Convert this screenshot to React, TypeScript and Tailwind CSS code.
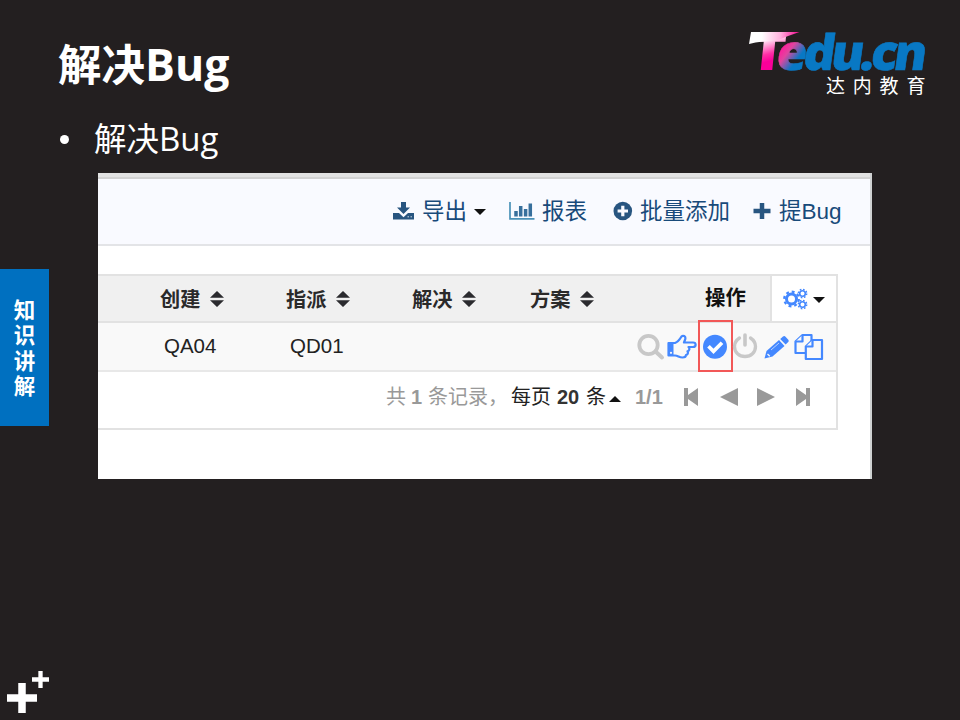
import React from "react";

const CJK = "font-['Liberation_Sans','Noto_Sans_CJK_SC',sans-serif]";
const SLIDE = "font-['Open_Sans','Noto_Sans_CJK_SC',sans-serif]";

function Logo() {
  return (
    <svg width="200" height="104" viewBox="740 0 200 104" className="shrink-0">
      <defs>
        <linearGradient id="pink" gradientUnits="userSpaceOnUse" x1="8" y1="-36" x2="16" y2="-8">
          <stop offset="0" stopColor="#ffffff" />
          <stop offset="0.3" stopColor="#ffd9ef" />
          <stop offset="0.75" stopColor="#ff2fa5" />
          <stop offset="1" stopColor="#fb0099" />
        </linearGradient>
        <linearGradient id="wing" gradientUnits="userSpaceOnUse" x1="762" y1="34" x2="799" y2="36">
          <stop offset="0" stopColor="#ffffff" />
          <stop offset="0.5" stopColor="#ffb0dd" />
          <stop offset="1" stopColor="#f5068f" />
        </linearGradient>
        <linearGradient id="blue" gradientUnits="userSpaceOnUse" x1="2" y1="-20" x2="20" y2="-9">
          <stop offset="0" stopColor="#ff1c9c" />
          <stop offset="0.4" stopColor="#e0459f" />
          <stop offset="1" stopColor="#0878c4" />
        </linearGradient>
      </defs>
      <text transform="translate(749 70) skewX(-6)" x="0" y="0" textLength="35" lengthAdjust="spacingAndGlyphs" fill="url(#pink)" fontSize="51" fontWeight="800" fontFamily="'Open Sans', sans-serif">T</text>
      <path d="M751 32H799.500Q787 36 776 41L763 41.500Q755 42 749 44Z" fill="url(#wing)" />
      <text transform="translate(775 70) skewX(-8)" x="0" y="0" textLength="150" lengthAdjust="spacing" fill="url(#blue)" stroke="url(#blue)" strokeWidth="0.600" fontSize="49" fontWeight="800" fontFamily="'Open Sans', sans-serif">edu.cn</text>
      <text x="826" y="92.500" fill="#fff" fontSize="19" letterSpacing="7.800" fontFamily="'Noto Sans CJK SC', sans-serif">达内教育</text>
    </svg>
  );
}

function Caret({ up = false, className = "" }: { up?: boolean; className?: string }) {
  return (
    <svg width="12" height="6" viewBox="0 0 12 6" className={`shrink-0 ${className}`}>
      <path d={up ? "M0 6L6 0L12 6Z" : "M0 0H12L6 6Z"} fill="#111" />
    </svg>
  );
}

function DownloadIcon() {
  return (
    <svg width="22" height="20" viewBox="0 0 22 20" className="-mt-[3px] shrink-0">
      <path d="M8 1H13V6.500H17L10.500 13L4 6.500H8Z" fill="#285580" />
      <path d="M0 12H6L10.500 16.200L15 12H21V18.500H0Z" fill="#285580" />
      <path d="M14.500 15.800H16M17.500 15.800H19" stroke="#c9d7e5" strokeWidth="1" />
    </svg>
  );
}

function ChartIcon() {
  return (
    <svg width="26" height="20" viewBox="0 0 26 20" className="-mt-[2px] shrink-0">
      <path d="M1 1V17.800H25.500" fill="none" stroke="#4a91b8" strokeWidth="1.700" />
      <path d="M7 10V15.500M11.700 5V15.500M16.600 8V15.500M21.300 2.500V15.500" stroke="#376f9c" strokeWidth="3.500" />
    </svg>
  );
}

function PlusCircleIcon() {
  return (
    <svg width="20" height="20" viewBox="0 0 20 20" className="-mt-[2px] shrink-0">
      <circle cx="9.800" cy="10" r="9.300" fill="#285580" />
      <path d="M9.800 4.800V15.200M4.600 10H15" stroke="#f9faff" strokeWidth="3.200" />
    </svg>
  );
}

function PlusIcon() {
  return (
    <svg width="18" height="18" viewBox="0 0 18 18" className="-mt-[3px] shrink-0">
      <path d="M9 1V17M0.500 9H17.500" stroke="#285580" strokeWidth="4.500" />
    </svg>
  );
}

function SortIcon() {
  return (
    <svg width="14" height="16" viewBox="0 0 14 16" className="ml-[9px] mt-px shrink-0">
      <path d="M7 0L14 6.800H0ZM0 9.200H14L7 16Z" fill="#2a2a2e" />
    </svg>
  );
}

function GearsIcon() {
  return (
    <svg width="26" height="22" viewBox="0 0 26 22" className="shrink-0">
      <g fill="none" stroke="#4488ff">
        <circle cx="8.500" cy="11" r="5" strokeWidth="3" />
        <circle cx="8.500" cy="11" r="7.300" strokeWidth="2.200" strokeDasharray="2.867 2.867" />
        <circle cx="19.500" cy="5.500" r="2.800" strokeWidth="1.600" />
        <circle cx="19.500" cy="5.500" r="4.200" strokeWidth="1.400" strokeDasharray="1.650 1.650" />
        <circle cx="19.500" cy="16.500" r="2.800" strokeWidth="1.600" />
        <circle cx="19.500" cy="16.500" r="4.200" strokeWidth="1.400" strokeDasharray="1.650 1.650" />
      </g>
    </svg>
  );
}

function SearchIcon() {
  return (
    <svg width="28" height="28" viewBox="0 0 28 28" className="shrink-0">
      <circle cx="11.500" cy="12" r="9.200" fill="none" stroke="#c8c8c8" strokeWidth="3.800" />
      <path d="M18.500 18.500L25 24.500" stroke="#c8c8c8" strokeWidth="4" strokeLinecap="round" />
    </svg>
  );
}

function HandIcon() {
  return (
    <svg width="30" height="26" viewBox="0 0 30 26" className="shrink-0">
      <path d="M1.500 9H8C11 8 13 5 14.500 2.500C16 1 19 2 18.300 5L17 8.500H26C29.500 8.500 29.500 13 26 13H21.500C23 14.500 22.500 17 20.500 17.300C21.500 19 20.500 20.800 19 21C19 23 17.500 23.500 15.500 23.500C12 23.500 11 21.500 8 21.500H1.500Z" fill="none" stroke="#4488ff" strokeWidth="2.200" strokeLinejoin="round" />
      <path d="M1 8.500H6.500V22H1Z" fill="#4488ff" />
      <circle cx="4" cy="18.800" r="1.100" fill="#f9f9f9" />
    </svg>
  );
}

function CheckIcon() {
  return (
    <svg width="26" height="26" viewBox="0 0 26 26">
      <circle cx="12" cy="12.800" r="12" fill="#4488ff" />
      <path d="M5.500 12.300L10.500 17.300L19 8.800" fill="none" stroke="#fff" strokeWidth="3.700" />
    </svg>
  );
}

function PowerIcon() {
  return (
    <svg width="26" height="26" viewBox="0 0 26 26" className="-ml-px mr-px mt-[-2px] shrink-0">
      <path d="M7.500 5C4 7.300 2.500 10 2.500 13.500C2.500 19.500 7 23.500 13 23.500S23.500 19.500 23.500 13.500C23.500 10 22 7.300 18.500 5" fill="none" stroke="#c8c8c8" strokeWidth="3.300" strokeLinecap="round" />
      <path d="M13 2V12" stroke="#c8c8c8" strokeWidth="3.600" strokeLinecap="round" />
    </svg>
  );
}

function PencilIcon() {
  return (
    <svg width="26" height="26" viewBox="0 0 26 26" className="shrink-0">
      <path d="M0.500 24.500L2.500 17L15 6L20.500 12L8.500 22.500Z" fill="#4488ff" />
      <path d="M16.200 5L19 2.600C20 1.800 20.800 2 21.500 2.700L24.300 5.800C25 6.700 24.800 7.600 24 8.300L21.600 10.600Z" fill="#4488ff" />
      <path d="M7 16L15 9" stroke="#b8d2ff" strokeWidth="1" />
      <path d="M3.500 20L5.800 22.300" stroke="#f9f9f9" strokeWidth="1.300" />
    </svg>
  );
}

function CopyIcon() {
  return (
    <svg width="30" height="28" viewBox="0 0 30 28" className="shrink-0">
      <g fill="#f9f9f9" stroke="#4488ff" strokeWidth="2.200" strokeLinejoin="round">
        <path d="M1.500 8.500L8.500 2H17.500V20H1.500Z" />
        <path d="M8.500 2V8.500H1.500" />
        <path d="M11.800 13.500L18.500 7H28V26H11.800Z" />
        <path d="M18.500 7V13.500H11.800" />
      </g>
    </svg>
  );
}

function Heading({ children, className }: { children: string; className: string }) {
  return (
    <div className={`flex shrink-0 items-center ${className}`}>
      <span className="w-[41px] shrink-0 pt-[3px] text-[20.2px] leading-none">{children}</span>
      <SortIcon />
    </div>
  );
}

function Toolbar() {
  return (
    <div className="flex h-[67px] items-center whitespace-nowrap border-b-2 border-[#e3e4e7] bg-[#f9faff] pl-[295px] pt-[1px] text-[22.5px] leading-none text-[#184a7a]">
      <DownloadIcon />
      <span className="ml-[7px] w-[46px]">导出</span>
      <Caret className="ml-[6px]" />
      <span className="ml-[23px] flex"><ChartIcon /></span>
      <span className="ml-[7px] w-[46px]">报表</span>
      <span className="ml-[25px] flex"><PlusCircleIcon /></span>
      <span className="ml-[7px] w-[91px]">批量添加</span>
      <span className="ml-[22px] flex"><PlusIcon /></span>
      <span className="ml-[8px]">提Bug</span>
    </div>
  );
}

function BugTable() {
  return (
    <div className="mt-[28px] flex h-[156px] w-[740px] flex-col whitespace-nowrap border-y-2 border-r-2 border-[#e2e2e2]">
      <div className="flex h-[47px] shrink-0 border-b-2 border-[#e2e2e2] bg-[#f0f0f0] font-bold text-[#2a2a2a]">
        <div className="flex w-[672px] shrink-0 items-center">
          <Heading className="ml-[62px] w-[126px]">创建</Heading>
          <Heading className="w-[126px]">指派</Heading>
          <Heading className="w-[118px]">解决</Heading>
          <Heading className="w-[175px]">方案</Heading>
          <span className="text-[20.4px] leading-none text-[#111]">操作</span>
        </div>
        <div className="flex flex-1 items-center border-l-2 border-[#e2e2e2] bg-white pl-[11px]">
          <GearsIcon />
          <Caret className="ml-[4px] mt-[2px]" />
        </div>
      </div>
      <div className="flex h-[49px] shrink-0 items-center border-b-2 border-[#e8e8e8] bg-[#f9f9f9] text-[20.5px] leading-none text-[#222]">
        <span className="ml-[66px] w-[126px] shrink-0">QA04</span>
        <span className="w-[347px] shrink-0">QD01</span>
        <SearchIcon />
        <span className="ml-[2px] flex"><HandIcon /></span>
        <span className="-mb-1 -mt-[6px] ml-[1px] flex h-[52px] w-[35px] shrink-0 items-center justify-center border-2 border-[#f25858] pt-[2px]"><CheckIcon /></span>
        <PowerIcon />
        <span className="ml-[5px] flex"><PencilIcon /></span>
        <span className="ml-[4px] flex"><CopyIcon /></span>
      </div>
      <div className="flex flex-1 items-center pb-[6px] text-[20px] leading-none text-[#999]">
        <span className="ml-[288px] w-[25px]">共</span>
        <b className="w-[17px]">1</b>
        <span className="w-[83px]">条记录，</span>
        <span className="w-[46px] text-[#222]">每页</span>
        <b className="w-[29px] text-[#333]">20</b>
        <span className="w-[23px] text-[#222]">条</span>
        <Caret up className="mt-1" />
        <b className="ml-[14px] w-[49px]">1/1</b>
        <svg width="14" height="18" viewBox="0 0 14 18" className="shrink-0"><path d="M0 0H4V7L14 0V18L4 11V18H0Z" fill="#999" /></svg>
        <svg width="18" height="18" viewBox="0 0 18 18" className="ml-[22px] shrink-0"><path d="M0 9L18 0V18Z" fill="#999" /></svg>
        <svg width="18" height="18" viewBox="0 0 18 18" className="ml-[19px] shrink-0"><path d="M18 9L0 0V18Z" fill="#999" /></svg>
        <svg width="14" height="18" viewBox="0 0 14 18" className="ml-[21px] shrink-0"><path d="M14 0H10V7L0 0V18L10 11V18H14Z" fill="#999" /></svg>
      </div>
    </div>
  );
}

export default function App() {
  return (
    <div className={`flex h-[720px] w-[960px] overflow-hidden bg-[#231f20] text-white ${SLIDE}`}>
      <aside className="flex w-[49px] shrink-0 flex-col pt-[269px]">
        <div className="flex h-[157px] flex-col items-center justify-center bg-[#0070c0] text-[21.5px] font-bold leading-[25.500px]">
          <span>知</span>
          <span>识</span>
          <span>讲</span>
          <span>解</span>
        </div>
        <svg width="49" height="50" viewBox="0 670 49 50" className="mt-[244px]">
          <path d="M7 698H37M22 683V713" stroke="#fff" strokeWidth="7.500" />
          <path d="M32 679.500H49M40.500 671V688" stroke="#fff" strokeWidth="4.300" />
        </svg>
      </aside>
      <main className="flex flex-1 flex-col">
        <header className="flex h-[104px] justify-between pl-[9px] pr-[20px]">
          <h1 className="mt-[34px] text-[43.500px] font-bold leading-[60px]">解决<span className="text-[44.5px]">Bug</span></h1>
          <Logo />
        </header>
        <div className="flex h-[69px] items-center pl-[11px] pt-[1px]">
          <span className="size-[9px] rounded-full bg-white" />
          <p className="ml-[25px] text-[32.500px] leading-[48px]">解决<span className="text-[33px]">Bug</span></p>
        </div>
        <section className={`ml-[49px] h-[306px] w-[774px] border-r-2 border-[#cfd2d2] bg-white ${CJK}`}>
          <div className="h-[6px] border-b-2 border-[#d2d2d2] bg-[#e2e2e2]" />
          <Toolbar />
          <BugTable />
        </section>
      </main>
    </div>
  );
}
